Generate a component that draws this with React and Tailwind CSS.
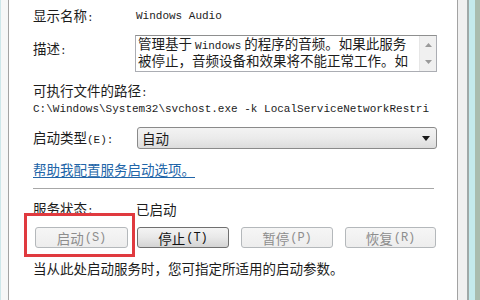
import React from "react";

// Windows 7 service properties dialog (general tab, lower part)
const cjk = "font-['Noto_Sans_CJK_SC',sans-serif]";
const mono = "font-['Liberation_Mono','Noto_Sans_CJK_SC',monospace] text-[11px]";

function WinButton({ label, hotkey, disabled, className = "" }) {
  const look = disabled
    ? "border-[#b4b8bb] bg-linear-to-b from-[#f6f6f6] to-[#ededed] text-[#8d8d8d]"
    : "border-[#707070] bg-linear-to-b from-[#f4f4f4] via-[#e8e8e8] to-[#d4d4d4] text-[#111]";
  return (
    <div
      className={`h-[21px] flex items-center justify-center rounded-[3px] border ${look} ${className}`}
    >
      <span className="text-[13.5px] leading-[20px]">{label}</span>
      <span className="font-['Liberation_Mono',monospace] text-[12px] ml-[1px]">({hotkey})</span>
    </div>
  );
}

export default function App() {
  return (
    <div className={`w-[480px] h-[300px] flex bg-white overflow-hidden text-[#1c1c1c] ${cjk}`}>
      {/* left window frame */}
      <div className="w-[9px] h-full border-l border-[#cde7ea] bg-[#f6f7f7] border-r border-r-[#a3a3a3]" />

      {/* dialog content */}
      <div className="w-[448px] h-full pl-[24px] flex flex-col text-[13.5px]">
        {/* display name */}
        <div className="mt-[6px] h-[20px] flex items-center">
          <div className="w-[103px] leading-[20px]">
            显示名称<span className={mono}>:</span>
          </div>
          <span className={mono}>Windows Audio</span>
        </div>

        {/* description */}
        <div className="mt-[9px] flex items-start">
          <div className="w-[102px] mt-[3px] leading-[20px]">
            描述<span className={mono}>:</span>
          </div>
          <div className="w-[302px] h-[37px] flex border border-[#abadb3] border-t-[#8e8f8f] bg-white">
            <div className="flex-1 pl-[2px] overflow-hidden leading-[14px] text-[13.5px] whitespace-nowrap">
              <div>
                管理基于 <span className={mono}>Windows</span> 的程序的音频。如果此服务
              </div>
              <div>被停止，音频设备和效果将不能正常工作。如</div>
            </div>
            <div className="w-[17px] h-full bg-[#f0f0f0] border-l border-[#e6e6e6] flex flex-col items-center justify-between py-[7px]">
              <svg width="7" height="4" viewBox="0 0 7 4">
                <path d="M0 4 L3.5 0 L7 4 Z" fill="#9a9a9a" />
              </svg>
              <svg width="7" height="4" viewBox="0 0 7 4">
                <path d="M0 0 L7 0 L3.5 4 Z" fill="#9a9a9a" />
              </svg>
            </div>
          </div>
        </div>

        {/* executable path */}
        <div className="mt-[8px] h-[20px] leading-[20px]">
          可执行文件的路径<span className={mono}>:</span>
        </div>
        <div className={`${mono} h-[18px] leading-[18px] whitespace-nowrap`}>
          C:\Windows\System32\svchost.exe -k LocalServiceNetworkRestri
        </div>

        {/* startup type */}
        <div className="mt-[9px] h-[22px] flex items-center">
          <div className="w-[104px] leading-[20px]">
            启动类型<span className={mono}>(E):</span>
          </div>
          <div className="w-[300px] h-[22px] flex items-center justify-between pl-[4px] pr-[6px] rounded-[3px] border border-[#8a8a8a] bg-linear-to-b from-[#f3f3f3] via-[#ebebeb] to-[#dcdcdc]">
            <span className="leading-[20px]">自动</span>
            <svg width="8" height="5" viewBox="0 0 8 5">
              <path d="M0 0 L8 0 L4 5 Z" fill="#1a1a1a" />
            </svg>
          </div>
        </div>

        {/* help link */}
        <div className="mt-[10px] h-[20px] leading-[20px]">
          <span className="text-[#2165a8] underline underline-offset-[2px] decoration-[#2165a8]">
            帮助我配置服务启动选项。
          </span>
        </div>

        {/* separator */}
        <div className="mt-[9px] w-[401px] h-px bg-[#a7a7a7]" />

        {/* service status */}
        <div className="mt-[10px] h-[20px] flex items-center">
          <div className="w-[103px] leading-[20px]">
            服务状态<span className={mono}>:</span>
          </div>
          <span className="leading-[20px]">已启动</span>
        </div>

        {/* buttons */}
        <div className="mt-[8px] flex">
          <div className="relative ml-[2px]">
            <WinButton label="启动" hotkey="S" disabled className="w-[93px]" />
            <div className="absolute left-[-11px] top-[-14px] w-[111px] h-[44px] border-[3px] border-[#e03a3f]" />
          </div>
          <WinButton label="停止" hotkey="T" className="w-[92px] ml-[9px]" />
          <WinButton label="暂停" hotkey="P" disabled className="w-[92px] ml-[12px]" />
          <WinButton label="恢复" hotkey="R" disabled className="w-[91px] ml-[12px]" />
        </div>

        {/* hint */}
        <div className="mt-[10px] h-[20px] leading-[20px] whitespace-nowrap">
          当从此处启动服务时，您可指定所适用的启动参数。
        </div>
      </div>

      {/* right window frame */}
      <div className="w-[23px] h-full flex border-l border-[#a3a3a3]">
        <div className="w-[9px] h-full bg-[#f0f0f0]" />
        <div className="w-[2px] h-full bg-[#9fa9a8]" />
        <div className="w-[6px] h-full bg-[#c4eaec]" />
        <div className="flex-1 h-full bg-[#a9bcae]" />
      </div>
    </div>
  );
}
